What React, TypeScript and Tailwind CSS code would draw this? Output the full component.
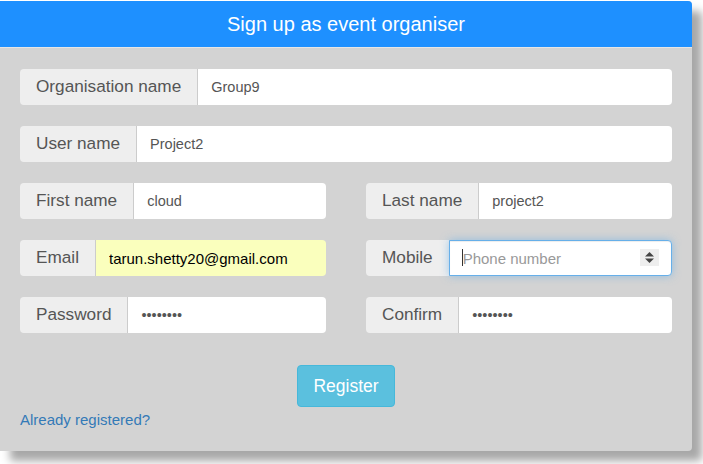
import React from "react";

interface FieldProps {
  label: string;
  value?: string;
  type?: string;
  autofill?: boolean;
}

const font = { fontFamily: '"Liberation Sans", Arial, sans-serif' };

const Addon: React.FC<{ label: string }> = ({ label }) => (
  <span className="flex items-center px-4 bg-[#eeeeee] text-[#555555] text-[17.2px] rounded-l whitespace-nowrap">
    {label}
  </span>
);

const Field: React.FC<FieldProps> = ({ label, value, type = "text", autofill }) => (
  <div className="flex h-9 w-full">
    <Addon label={label} />
    <input
      type={type}
      readOnly
      value={value}
      className={`flex-1 min-w-0 h-9 px-[13px] border-l border-[#cccccc] rounded-r outline-none ${
        autofill
          ? "bg-[#faffbd] text-black text-[15px]"
          : "bg-white text-[#555555] text-[14.5px]"
      }`}
      style={font}
    />
  </div>
);

const MobileField: React.FC = () => (
  <div className="flex h-9 w-full">
    <Addon label="Mobile" />
    <div className="relative flex-1 min-w-0">
      <input
        type="text"
        readOnly
        placeholder="Phone number"
        className="w-full h-9 pl-[13px] pr-10 bg-white text-[15px] text-[#555555] placeholder:text-[#999999] border border-[#66afe9] rounded-r outline-none shadow-[inset_0_1px_1px_rgba(0,0,0,0.075),0_0_8px_rgba(102,175,233,0.6)]"
        style={font}
      />
      <span className="absolute left-[13px] top-[9px] w-px h-[17px] bg-[#333333]" />
      <span className="absolute right-[13px] top-[9px] w-[19px] h-[17px] bg-[#eeeeee] flex items-center justify-center">
        <svg width="9" height="11" viewBox="0 0 9 11">
          <path d="M4.5 0 L9 4.5 H0 Z" fill="#444" />
          <path d="M0 6.5 H9 L4.5 11 Z" fill="#444" />
        </svg>
      </span>
    </div>
  </div>
);

export default function App() {
  return (
    <div className="w-[703px] h-[464px] bg-white overflow-hidden" style={font}>
      <div className="mt-px w-[692px] h-[450px] bg-[#d3d3d3] rounded-r shadow-[10px_10px_8px_#a8a8a8] flex flex-col">
        <div className="h-[47px] bg-[#1e90ff] rounded-tr flex items-center justify-center text-white text-[20px] border-b border-[#e6e6e6]">
          Sign up as event organiser
        </div>
        <div className="flex flex-col px-5 pt-[21px]">
          <div className="flex flex-col gap-[21px]">
            <Field label="Organisation name" value="Group9" />
            <Field label="User name" value="Project2" />
            <div className="grid grid-cols-2 gap-10">
              <Field label="First name" value="cloud" />
              <Field label="Last name" value="project2" />
            </div>
            <div className="grid grid-cols-2 gap-10">
              <Field label="Email" value="tarun.shetty20@gmail.com" autofill />
              <MobileField />
            </div>
            <div className="grid grid-cols-2 gap-10">
              <Field label="Password" value="password" type="password" />
              <Field label="Confirm" value="password" type="password" />
            </div>
          </div>
          <div className="flex justify-center mt-[32px]">
            <button className="w-[98px] h-[42px] bg-[#5bc0de] border border-[#46b8da] rounded text-white text-[17.5px]">
              Register
            </button>
          </div>
          <a href="#" className="mt-[2px] self-start text-[#337ab7] text-[15px]">
            Already registered?
          </a>
        </div>
      </div>
    </div>
  );
}
